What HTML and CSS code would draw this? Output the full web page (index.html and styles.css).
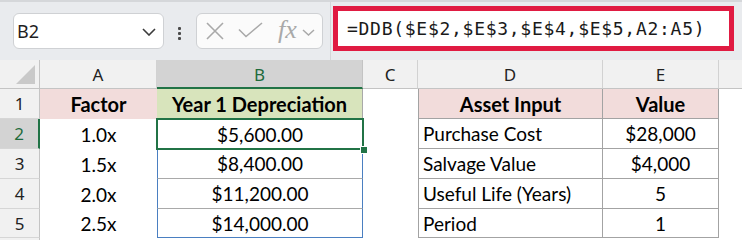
FILE: index.html
```html
<!DOCTYPE html>
<html>
<head>
<meta charset="utf-8">
<link rel="stylesheet" href="styles.css">
</head>
<body>
<div class="app">
  <div class="toolbar">
    <div class="namebox">
      <span class="name">B2</span>
      <svg class="chev" width="14" height="8" viewBox="0 0 14 8"><path d="M1 1 L7 7 L13 1" fill="none" stroke="#3b3b3b" stroke-width="1.6"/></svg>
    </div>
    <div class="dots"><i></i><i></i><i></i></div>
    <div class="btnbox">
      <svg class="ico" width="18" height="18" viewBox="0 0 18 18"><path d="M1 1 L17 17 M17 1 L1 17" stroke="#a9a9a9" stroke-width="1.6" fill="none"/></svg>
      <svg class="ico chk" width="26" height="18" viewBox="0 0 26 18"><path d="M1 7.5 L8 14.5 L24 1" stroke="#a9a9a9" stroke-width="1.6" fill="none"/></svg>
      <span class="fx">fx</span>
      <svg class="ico smchev" width="13" height="7" viewBox="0 0 13 7"><path d="M1 1 L6.5 6 L12 1" stroke="#a9a9a9" stroke-width="1.5" fill="none"/></svg>
    </div>
    <div class="fsection">
      <div class="formula">=DDB($E$2,$E$3,$E$4,$E$5,A2:A5)</div>
    </div>
  </div>
  <div class="sheet">
    <div class="hd corner"><span class="tri"></span></div>
    <div class="hd col">A</div>
    <div class="hd col sel">B</div>
    <div class="hd col">C</div>
    <div class="hd col">D</div>
    <div class="hd col">E</div>
    <div class="hd col last"></div>

    <div class="hd row">1</div>
    <div class="c pink b">Factor</div>
    <div class="c green b bhead">Year 1 Depreciation</div>
    <div class="c"></div>
    <div class="c pink b tl">Asset Input</div>
    <div class="c pink b tr">Value</div>
    <div class="c"></div>

    <div class="hd row sel">2</div>
    <div class="c">1.0x</div>
    <div class="c active">$5,600.00<span class="handle"></span></div>
    <div class="c"></div>
    <div class="c tl left">Purchase Cost</div>
    <div class="c tr">$28,000</div>
    <div class="c"></div>

    <div class="hd row">3</div>
    <div class="c">1.5x</div>
    <div class="c blue">$8,400.00</div>
    <div class="c"></div>
    <div class="c tl left">Salvage Value</div>
    <div class="c tr">$4,000</div>
    <div class="c"></div>

    <div class="hd row">4</div>
    <div class="c">2.0x</div>
    <div class="c blue">$11,200.00</div>
    <div class="c"></div>
    <div class="c tl left">Useful Life (Years)</div>
    <div class="c tr">5</div>
    <div class="c"></div>

    <div class="hd row">5</div>
    <div class="c">2.5x</div>
    <div class="c blue blast">$14,000.00</div>
    <div class="c"></div>
    <div class="c tl left">Period</div>
    <div class="c tr">1</div>
    <div class="c"></div>

    <div class="hd row"></div>
    <div class="c"></div>
    <div class="c"></div>
    <div class="c"></div>
    <div class="c"></div>
    <div class="c"></div>
    <div class="c"></div>
  </div>
</div>
</body>
</html>
```

FILE: styles.css
```css
* { box-sizing: border-box; }
html, body { margin: 0; padding: 0; }
body {
  width: 742px;
  height: 240px;
  overflow: hidden;
  background: #ffffff;
}
.app { width: 742px; }

.toolbar {
  height: 60px;
  background: #e9ebee;
  border-top: 2px solid #d5d7da;
  display: flex;
  align-items: flex-start;
}
.namebox {
  margin-top: 11px;
  margin-left: 13px;
  width: 151px;
  height: 36px;
  background: #fff;
  border: 1px solid #cfd1d4;
  border-radius: 6px;
  display: flex;
  align-items: center;
  justify-content: space-between;
  padding: 0 7px 0 3px;
}
.name {
  font-family: "Noto Sans", sans-serif;
  font-size: 18px;
  color: #1f1f1f;
}
.chev { margin-top: 2px; }
.dots {
  margin-top: 25px;
  margin-left: 14px;
  width: 3px;
  display: flex;
  flex-direction: column;
  gap: 2px;
}
.dots i {
  display: block;
  width: 3px;
  height: 3px;
  border-radius: 1px;
  background: #4a4a4a;
}
.btnbox {
  margin-top: 11px;
  margin-left: 15px;
  width: 127px;
  height: 36px;
  background: #fbfbfb;
  border: 1px solid #cfd1d4;
  border-radius: 6px;
  display: flex;
  align-items: center;
  padding-left: 9px;
}
.ico { display: block; flex: none; }
.chk { margin-left: 14px; margin-top: -1px; }
.fx {
  margin-left: 14px;
  font-family: "Liberation Serif", serif;
  font-style: italic;
  font-size: 26px;
  color: #a9a9a9;
  line-height: 1;
  margin-top: -3px;
}
.smchev { margin-left: 5px; margin-top: 2px; }
.fsection {
  margin-left: 7px;
  height: 58px;
  border-left: 1px solid #d5d7da;
  padding-left: 2px;
  padding-top: 4px;
  flex: 1;
}
.formula {
  width: 401px;
  height: 45px;
  border: 5px solid #e01b42;
  background: #ffffff;
  font-family: "DejaVu Sans Mono", monospace;
  font-size: 18px;
  letter-spacing: 0.72px;
  color: #1a1a1a;
  display: flex;
  align-items: center;
  padding-left: 9px;
  padding-bottom: 1px;
  white-space: nowrap;
}

.sheet {
  display: grid;
  grid-template-columns: 40px 117px 206px 55px 185px 116px 23px;
  grid-template-rows: 29px 30px 30px 30px 30px 29px 30px;
  font-family: "Lato", sans-serif;
  font-size: 19px;
  color: #000;
}
.hd {
  background: #f1f1f1;
  font-family: "Noto Sans", sans-serif;
  font-size: 17px;
  color: #222;
  display: flex;
  align-items: center;
  justify-content: center;
}
.corner {
  border-right: 1px solid #c4c4c4;
  border-bottom: 1px solid #c4c4c4;
  position: relative;
}
.tri {
  position: absolute;
  right: 4px;
  bottom: 4px;
  width: 0;
  height: 0;
  border-left: 19px solid transparent;
  border-bottom: 19px solid #c9c9c9;
}
.col {
  border-right: 1px solid #d2d2d2;
  border-bottom: 1px solid #c4c4c4;
  padding-top: 1px;
}
.col.sel {
  background: #d3d3d3;
  color: #1e6b3c;
  border-bottom: 2px solid #217346;
  border-right-color: #c4c4c4;
}
.col.last { border-right: none; }
.row {
  border-right: 1px solid #c4c4c4;
  border-bottom: 1px solid #d6d6d6;
}
.row.sel {
  background: #d3d3d3;
  color: #1e6b3c;
  border-right: 2px solid #217346;
}

.c {
  display: flex;
  align-items: center;
  justify-content: center;
  white-space: nowrap;
  background: #fff;
}
.c.b { font-weight: 700; font-size: 20px; }
.pink { background: #f2dcdb; }
.green { background: #d8e4bc; }
.bhead { border-right: 1px solid #a9a9a9; }
.tl {
  border-left: 1px solid #a3a3a3;
  border-right: 1px solid #a3a3a3;
  border-bottom: 1px solid #a3a3a3;
}
.tr {
  border-right: 1px solid #a3a3a3;
  border-bottom: 1px solid #a3a3a3;
}
.left { justify-content: flex-start; padding-left: 4px; }
.active {
  position: relative;
  z-index: 2;
  outline: 2px solid #217346;
  outline-offset: -1px;
}
.handle {
  position: absolute;
  right: -5px;
  bottom: -5px;
  width: 8px;
  height: 8px;
  background: #217346;
  border: 1px solid #fff;
}
.blue {
  border-left: 1px solid #4a7fc1;
  border-right: 1px solid #4a7fc1;
  border-bottom: 1px solid #a9a9a9;
}
.blue.blast { border-bottom: 1px solid #4a7fc1; }
```
